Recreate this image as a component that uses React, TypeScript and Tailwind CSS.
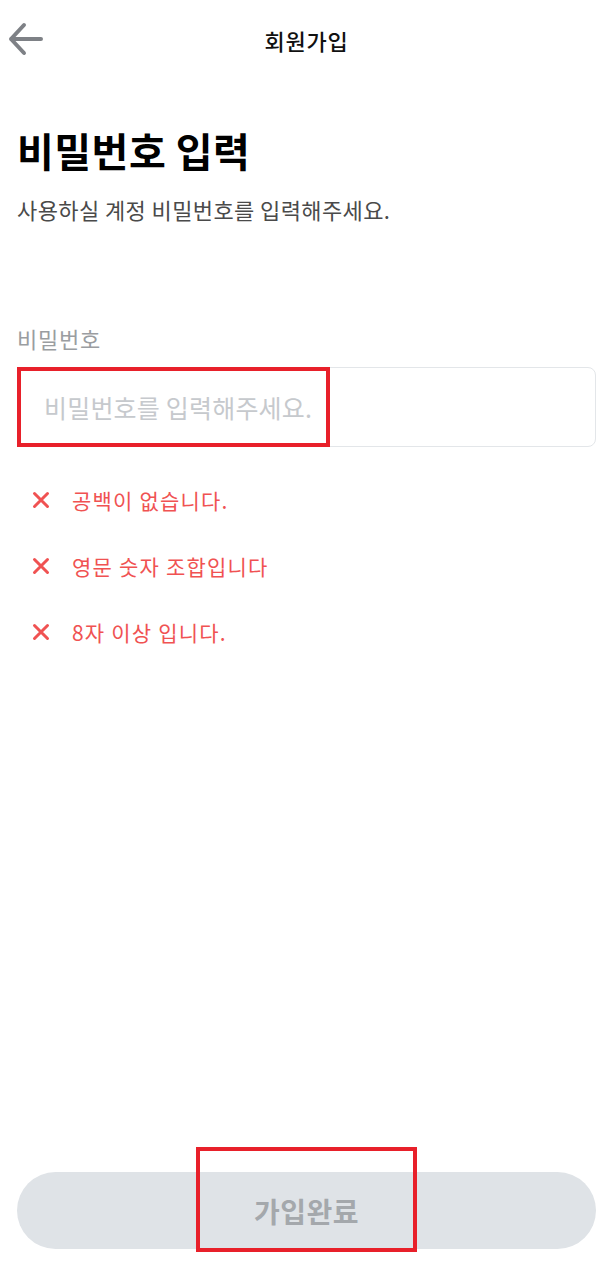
const font = "font-['Noto_Sans_CJK_KR','Noto_Sans',sans-serif]";

const rules = ["공백이 없습니다.", "영문 숫자 조합입니다", "8자 이상 입니다."];

const XMark = () => (
  <svg width="18" height="18" viewBox="0 0 18 18" fill="none">
    <path d="M2.5 2.5 L15.5 15.5 M15.5 2.5 L2.5 15.5" stroke="#f05252" strokeWidth="3" strokeLinecap="round" />
  </svg>
);

const App = () => {
  return (
    <div className={`${font} flex h-[1269px] w-full flex-col bg-white`}>
      <header className="relative flex h-[80px] items-center justify-center">
        <button className="absolute left-[8px] top-[22px]">
          <svg width="36" height="34" viewBox="0 0 36 34" fill="none">
            <path d="M16 3 L3 17 L16 31 M3 17 H33" stroke="#7e8186" strokeWidth="4" strokeLinecap="round" strokeLinejoin="round" />
          </svg>
        </button>
        <h1 className="text-[22px] font-medium tracking-[0.8px] text-[#111]">회원가입</h1>
      </header>

      <main className="flex flex-1 flex-col px-[17px]">
        <h2 className="mt-[46px] text-[40px] font-bold leading-[48px] tracking-[0.5px] text-black">비밀번호 입력</h2>
        <p className="mt-[20px] text-[22px] leading-[30px] tracking-[0.4px] text-[#4a4a4a]">사용하실 계정 비밀번호를 입력해주세요.</p>

        <label className="mt-[100px] text-[22px] leading-[28px] tracking-[0.8px] text-[#9a9da1]">비밀번호</label>
        <div className="relative mt-[15px]">
          <input
            type="password"
            placeholder="비밀번호를 입력해주세요."
            className="h-[80px] w-full rounded-[8px] border border-[#e3e6e9] px-[26px] text-[25px] tracking-[0.2px] text-[#222] outline-none placeholder:text-[#c6c9cd]"
          />
          <div className="pointer-events-none absolute left-0 top-0 h-[80px] w-[313px] border-4 border-[#e8202a]" />
        </div>

        <ul className="mt-[39px] flex flex-col gap-[38px]">
          {rules.map((r) => (
            <li key={r} className="flex items-center gap-[22px] pl-[15px] text-[21px] leading-[28px] tracking-[1.2px] text-[#f05252]">
              <XMark />
              <span>{r}</span>
            </li>
          ))}
        </ul>

        <div className="relative mb-[20px] mt-auto">
          <button className="h-[77px] w-full rounded-full bg-[#dfe3e7] text-[28px] font-bold tracking-[0.5px] text-[#a4a8ac]">가입완료</button>
          <div className="pointer-events-none absolute left-[179px] top-[-25px] h-[105px] w-[221px] border-4 border-[#e8202a]" />
        </div>
      </main>
    </div>
  );
};

export default App;
